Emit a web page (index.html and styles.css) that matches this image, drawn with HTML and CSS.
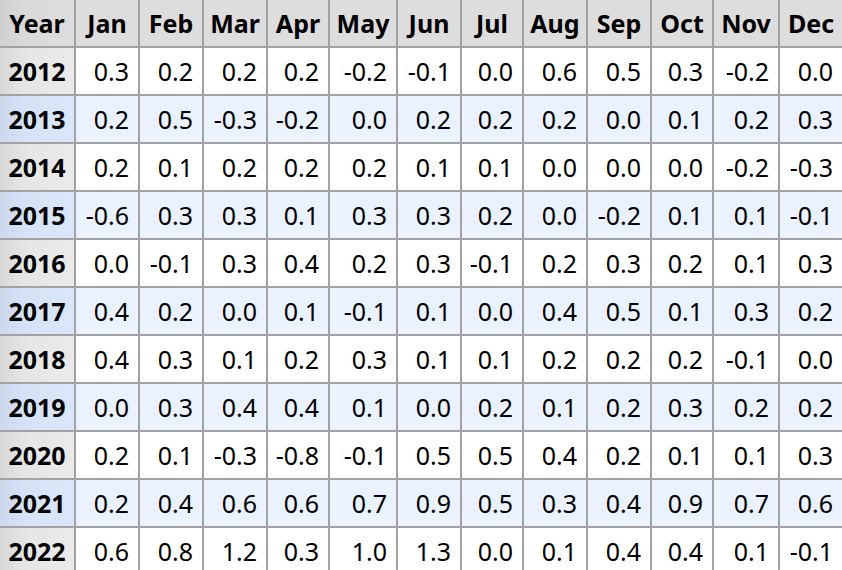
FILE: index.html
```html
<!DOCTYPE html>
<html lang="en">
<head>
<meta charset="utf-8">
<title>Monthly changes</title>
<link rel="stylesheet" href="styles.css">
</head>
<body>
<table class="data">
  <colgroup>
    <col class="c-year"><col class="c64"><col class="c64"><col class="c64"><col class="c62"><col class="c68"><col class="c64"><col class="c62"><col class="c64"><col class="c64"><col class="c62"><col class="c66"><col class="c64">
  </colgroup>
  <thead>
    <tr><th class="yr">Year</th><th>Jan</th><th>Feb</th><th>Mar</th><th>Apr</th><th>May</th><th>Jun</th><th>Jul</th><th>Aug</th><th>Sep</th><th>Oct</th><th>Nov</th><th>Dec</th></tr>
  </thead>
  <tbody>
    <tr><th class="yr">2012</th><td>0.3</td><td>0.2</td><td>0.2</td><td>0.2</td><td>-0.2</td><td>-0.1</td><td>0.0</td><td>0.6</td><td>0.5</td><td>0.3</td><td>-0.2</td><td>0.0</td></tr>
    <tr class="alt"><th class="yr">2013</th><td>0.2</td><td>0.5</td><td>-0.3</td><td>-0.2</td><td>0.0</td><td>0.2</td><td>0.2</td><td>0.2</td><td>0.0</td><td>0.1</td><td>0.2</td><td>0.3</td></tr>
    <tr><th class="yr">2014</th><td>0.2</td><td>0.1</td><td>0.2</td><td>0.2</td><td>0.2</td><td>0.1</td><td>0.1</td><td>0.0</td><td>0.0</td><td>0.0</td><td>-0.2</td><td>-0.3</td></tr>
    <tr class="alt"><th class="yr">2015</th><td>-0.6</td><td>0.3</td><td>0.3</td><td>0.1</td><td>0.3</td><td>0.3</td><td>0.2</td><td>0.0</td><td>-0.2</td><td>0.1</td><td>0.1</td><td>-0.1</td></tr>
    <tr><th class="yr">2016</th><td>0.0</td><td>-0.1</td><td>0.3</td><td>0.4</td><td>0.2</td><td>0.3</td><td>-0.1</td><td>0.2</td><td>0.3</td><td>0.2</td><td>0.1</td><td>0.3</td></tr>
    <tr class="alt"><th class="yr">2017</th><td>0.4</td><td>0.2</td><td>0.0</td><td>0.1</td><td>-0.1</td><td>0.1</td><td>0.0</td><td>0.4</td><td>0.5</td><td>0.1</td><td>0.3</td><td>0.2</td></tr>
    <tr><th class="yr">2018</th><td>0.4</td><td>0.3</td><td>0.1</td><td>0.2</td><td>0.3</td><td>0.1</td><td>0.1</td><td>0.2</td><td>0.2</td><td>0.2</td><td>-0.1</td><td>0.0</td></tr>
    <tr class="alt"><th class="yr">2019</th><td>0.0</td><td>0.3</td><td>0.4</td><td>0.4</td><td>0.1</td><td>0.0</td><td>0.2</td><td>0.1</td><td>0.2</td><td>0.3</td><td>0.2</td><td>0.2</td></tr>
    <tr><th class="yr">2020</th><td>0.2</td><td>0.1</td><td>-0.3</td><td>-0.8</td><td>-0.1</td><td>0.5</td><td>0.5</td><td>0.4</td><td>0.2</td><td>0.1</td><td>0.1</td><td>0.3</td></tr>
    <tr class="alt"><th class="yr">2021</th><td>0.2</td><td>0.4</td><td>0.6</td><td>0.6</td><td>0.7</td><td>0.9</td><td>0.5</td><td>0.3</td><td>0.4</td><td>0.9</td><td>0.7</td><td>0.6</td></tr>
    <tr><th class="yr">2022</th><td>0.6</td><td>0.8</td><td>1.2</td><td>0.3</td><td>1.0</td><td>1.3</td><td>0.0</td><td>0.1</td><td>0.4</td><td>0.4</td><td>0.1</td><td>-0.1</td></tr>
  </tbody>
</table>
</body>
</html>
```

FILE: styles.css
```css
html, body {
  margin: 0;
  padding: 0;
  overflow: hidden;
  background: #ffffff;
}

.data {
  border-collapse: separate;
  border-spacing: 0;
  table-layout: fixed;
  width: 844px;
  font-family: "Noto Sans", "Open Sans", sans-serif;
  font-size: 25px;
  color: #000000;
}

.c-year { width: 76px; }
.c62 { width: 62px; }
.c64 { width: 64px; }
.c66 { width: 66px; }
.c68 { width: 68px; }

.data th,
.data td {
  box-sizing: border-box;
  height: 48px;
  padding: 0 9px 0 0;
  border-right: 2px solid #a2a2a2;
  border-bottom: 2px solid #a2a2a2;
  white-space: nowrap;
  vertical-align: middle;
  line-height: 1;
}

.data td {
  text-align: right;
  background: #ffffff;
}

.data thead th {
  background: #dddddd;
  font-weight: 700;
  text-align: center;
  padding: 0;
}

.data th.yr {
  font-weight: 700;
  text-align: center;
  padding: 0;
  background: linear-gradient(to right, #d8d8d8 0%, #e6e6e6 35%, #eaeaea 100%);
}

.data thead th.yr {
  background: linear-gradient(to right, #d0d0d0 0%, #dadada 35%, #dddddd 100%);
}

.data tr.alt td {
  background: #eaf2ff;
}

.data tr.alt th.yr {
  background: linear-gradient(to right, #cbd8ee 0%, #d6e2f6 35%, #dae6f9 100%);
}
```
